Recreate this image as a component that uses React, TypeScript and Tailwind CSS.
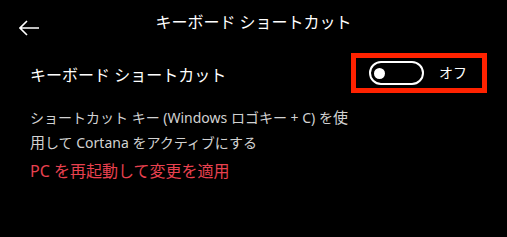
import { useState } from "react";

const FONT = "[font-family:'Noto_Sans','Noto_Sans_CJK_JP',sans-serif]";

function BackArrow() {
  return (
    <svg width="20" height="16" viewBox="0 0 20 16" fill="none" aria-hidden>
      <path d="M8 1 L1 8 L8 15 M1 8 H20" stroke="#ffffff" strokeWidth="1.6" />
    </svg>
  );
}

function Toggle({ on, onClick }: { on: boolean; onClick: () => void }) {
  return (
    <button
      type="button"
      onClick={onClick}
      className={`flex h-[24px] w-[55px] items-center rounded-full border-2 border-white px-[3px] ${
        on ? "justify-end" : "justify-start"
      }`}
    >
      <span className="block h-[11px] w-[11px] rounded-full bg-white" />
    </button>
  );
}

export default function App() {
  const [on, setOn] = useState(false);

  return (
    <div className={`h-[237px] w-[507px] overflow-hidden bg-black text-white ${FONT}`}>
      <header className="grid h-[44px] grid-cols-[60px_1fr_60px] items-center">
        <div className="pl-[19px] pt-[11px]">
          <BackArrow />
        </div>
        <h1 className="text-center text-[16px] font-normal leading-none">キーボード ショートカット</h1>
        <div />
      </header>

      <main className="pl-[30px] pr-[20px]">
        <div className="mt-[9px] flex items-center justify-between">
          <span className="pt-[4px] text-[16px] leading-none">キーボード ショートカット</span>
          <div className="flex h-[40px] items-center gap-[15px] border-[5px] border-[#ff2200] pl-[13px] pr-[15px]">
            <Toggle on={on} onClick={() => setOn(!on)} />
            <span className="text-[14px] leading-none">{on ? "オン" : "オフ"}</span>
          </div>
        </div>

        <p className="mt-[12px] text-[14px] leading-[25px] text-[#d2d2d2]">
          ショートカット キー (Windows ロゴキー + C) を<span className="text-[15px]">使</span>
          <br />
          <span className="text-[15px]">用</span>して Cortana をアクティブにする
        </p>
        <p className="mt-[4px] text-[16px] leading-[25px] text-[#e8414f]">PC を再起動して変更を適用</p>
      </main>
    </div>
  );
}
